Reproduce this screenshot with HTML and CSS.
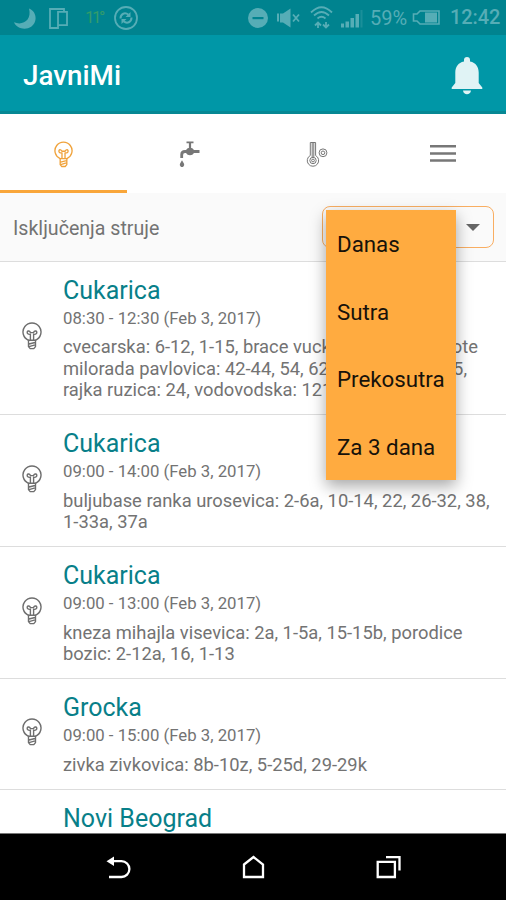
FILE: index.html
```html
<!DOCTYPE html>
<html lang="sr-Latn">
<head>
<meta charset="utf-8">
<title>JavniMi</title>
<link rel="stylesheet" href="styles.css">
</head>
<body>
<svg class="defs" aria-hidden="true">
  <symbol id="bulb" viewBox="0 0 20 28">
    <g fill="none" stroke="currentColor" stroke-width="1.4" stroke-linejoin="round" stroke-linecap="round">
      <path d="M6.500 18.300A9 9 0 1 1 13.500 18.300z"/>
      <path d="M8.400 18V12.300C6 12.600 4.900 11.500 5.200 9.900c.5-1.400 2.900-1.100 3.200.7h3.200c.3-1.800 2.700-2.100 3.200-.7.3 1.600-.8 2.700-3.200 2.400V18"/>
      <path d="M6.500 18.300v6.300l1.700 2h3.600l1.700-2v-6.300M7 22l6-1.500M7 24.600l6-1.700"/>
    </g>
  </symbol>
</svg>
<div class="screen">
  <header class="top">
    <div class="status">
      <svg class="status-left" viewBox="0 0 150 35" fill="none" stroke="currentColor">
        <path fill="currentColor" stroke="none" d="M29 8.500C38 12 38 25 28 28.300c-6 1.500-12-1-14-6C23 26 32 20 29 8.500z"/>
        <path stroke-width="1.800" d="M58 25.500v2.500h-8V9h14v2.500M58 11.800h9v13.300h-9z"/>
        <circle cx="126" cy="18" r="11" stroke-width="1.800"/>
        <path stroke-width="2" d="M120.500 18.500c0-5 4.500-6.500 8-3.800M131.500 17.500c0 5-4.500 6.500-8 3.800"/>
        <path fill="currentColor" stroke="none" d="M130.500 12v5h-5zM121.500 24v-5h5z"/>
      </svg>
      <span class="temp">11°</span>
      <svg class="status-right" viewBox="0 0 120 35" fill="currentColor">
        <circle cx="10" cy="18" r="10"/>
        <path class="cut" d="M4.500 17h11v2.200h-11z"/>
        <path d="M29 13.500h2v8h-2zM32 13.500h3l7.500-5v19l-7.500-5h-3z"/>
        <g fill="none" stroke="currentColor" stroke-width="1.800">
          <path d="M45 14.500l6 7m0-7l-6 7M63 12.500q10.500-10.500 21 0M66 15.500q7.500-7 15 0M69.500 18.500q4-3.500 8 0"/>
          <path d="M70 28v-5m-3 2.500l3-3 3 3M78 22v5m-3-2.500l3 3 3-3"/>
        </g>
        <path d="M93 23.500h3v4h-3zM97.500 21.500h3.500v6h-3.500zM102.500 18h3.500v9.500h-3.500zM107.500 14h3.500v13.500h-3.500z"/>
        <path opacity=".3" d="M112.500 10h2v17.500h-2z"/>
      </svg>
      <span class="percent">59%</span>
      <svg class="battery" viewBox="0 0 30 20"><path fill="none" stroke="currentColor" stroke-width="1.600" d="M27 3H8L5 6H1.500v7H5L8 16h19z"/><path fill="currentColor" d="M13 4.500h12v10H13z"/></svg>
      <span class="clock">12:42</span>
    </div>
    <div class="appbar">
      <h1 class="brand">JavniMi</h1>
      <svg class="bell" viewBox="0 0 32 38" fill="currentColor"><path d="M13 3a3 3 0 0 1 6 0v1.500c6 1.300 8.700 5.500 8.700 11V26l3.600 4.500V32H.7v-1.500L4.300 26V15.500C4.300 10 7 5.800 13 4.500zM12 33.500h8c-.5 5-7.500 5-8 0z"/></svg>
    </div>
  </header>

  <nav class="tabs">
    <div class="tab active"><svg class="tab-bulb"><use href="#bulb"/></svg></div>
    <div class="tab">
      <svg class="tab-tap" viewBox="0 0 22 28" fill="currentColor"><path d="M7.500 1.500h7v1.700h-2.400v5h-2.200v-5H7.500z"/><path d="M7 10a4.600 4.600 0 0 1 8 0h5.500v2.900H15a4.600 4.600 0 0 1-8 0H6q-1.900 0-1.900 2V18H1.300v-3.500q0-4.500 4.700-4.500z"/><path d="M3 20.300l1.900 3.300a2.200 2.200 0 1 1-3.800 0z"/></svg>
    </div>
    <div class="tab">
      <svg class="tab-temp" viewBox="0 0 24 28" fill="none" stroke="currentColor"><path d="M5.300 15.500V2.500h5.300v13a5.700 5.700 0 1 1-5.300 0z"/><circle cx="8" cy="20.500" r="3.200"/><circle cx="8" cy="20.500" r="1.400"/><path d="M7.200 17.500V3M8.800 17.500V3"/><circle cx="18" cy="12.800" r="3.900"/><circle cx="18" cy="12.800" r="1.800"/></svg>
    </div>
    <div class="tab"><svg class="tab-menu" viewBox="0 0 26 20" fill="currentColor"><path d="M0 1h26v2.500H0zM0 8.200h26v2.500H0zM0 15.300h26v2.500H0z"/></svg></div>
  </nav>

  <section class="filter">
    <span class="filter-label">Isključenja struje</span>
    <div class="select">
      <span class="arrow"></span>
      <ul class="menu">
        <li>Danas</li>
        <li>Sutra</li>
        <li>Prekosutra</li>
        <li>Za 3 dana</li>
      </ul>
    </div>
  </section>

  <main class="list">
    <article class="row">
      <svg class="row-icon"><use href="#bulb"/></svg>
      <div class="body"><h2>Cukarica</h2><p class="time">08:30 - 12:30 (Feb 3, 2017)</p>
      <p class="streets">cvecarska: 6-12, 1-15, brace vuckovica: 2-14, pelote<br>milorada pavlovica: 42-44, 54, 62-70, 51-57, 63-75,<br>rajka ruzica: 24, vodovodska: 121</p></div>
    </article>
    <article class="row">
      <svg class="row-icon"><use href="#bulb"/></svg>
      <div class="body"><h2>Cukarica</h2><p class="time">09:00 - 14:00 (Feb 3, 2017)</p>
      <p class="streets">buljubase ranka urosevica: 2-6a, 10-14, 22, 26-32, 38,<br>1-33a, 37a</p></div>
    </article>
    <article class="row">
      <svg class="row-icon"><use href="#bulb"/></svg>
      <div class="body"><h2>Cukarica</h2><p class="time">09:00 - 13:00 (Feb 3, 2017)</p>
      <p class="streets">kneza mihajla visevica: 2a, 1-5a, 15-15b, porodice<br>bozic: 2-12a, 16, 1-13</p></div>
    </article>
    <article class="row">
      <svg class="row-icon"><use href="#bulb"/></svg>
      <div class="body"><h2>Grocka</h2><p class="time">09:00 - 15:00 (Feb 3, 2017)</p>
      <p class="streets">zivka zivkovica: 8b-10z, 5-25d, 29-29k</p></div>
    </article>
    <article class="row">
      <span class="row-icon"></span>
      <div class="body"><h2>Novi Beograd</h2></div>
    </article>
  </main>

  <footer class="navbar">
    <svg class="nav-icon" viewBox="0 0 28 28" fill="none" stroke="currentColor" stroke-width="2.300"><path d="M7 8.200h9.500a7.900 7.900 0 0 1 0 15.800H4"/><path fill="currentColor" stroke="none" d="M1.500 8.200L9 3.500v9.400z"/></svg>
    <svg class="nav-icon" viewBox="0 0 28 28" fill="none" stroke="currentColor" stroke-width="2.300"><path d="M4 11.500L13.500 4l9.500 7.500V24H4z"/></svg>
    <svg class="nav-icon" viewBox="0 0 28 28" fill="none" stroke="currentColor" stroke-width="2.300"><path d="M2.700 8.800h17.200V24H2.700zM11 4.200h13.500V17.500"/></svg>
  </footer>
</div>
</body>
</html>
```
FILE: styles.css
```css
* { box-sizing: border-box; }
body { margin: 0; font-family: Roboto, "Liberation Sans", sans-serif; color: #737373; }
h1, h2, p, ul { margin: 0; padding: 0; }
svg { display: block; flex: none; }
.defs { position: absolute; width: 0; height: 0; }
.screen { width: 506px; height: 900px; overflow: hidden; display: flex; flex-direction: column; background: #fff; }

.top { flex: none; height: 114px; background: #0097a7; color: #fff; border-bottom: 3px solid #078894; }
.status { height: 35px; background: #00838f; color: #56adb6; display: flex; align-items: center; }
.status-left { width: 150px; height: 35px; }
.temp { width: 98px; margin-left: -65px; margin-right: 65px; font-size: 17px; letter-spacing: -2.500px; color: #329b6b; line-height: 35px; }
.status-right { width: 120px; height: 35px; }
.cut { fill: #00838f; }
.percent { margin-left: 2px; width: 42px; font-size: 20px; line-height: 38px; white-space: nowrap; }
.battery { width: 30px; height: 20px; }
.clock { margin-left: 8px; font-size: 20px; font-weight: 500; line-height: 39px; letter-spacing: -.1px; }
.appbar { height: 76px; padding: 5px 23px 0; display: flex; align-items: center; justify-content: space-between; }
.brand { font-size: 27.800px; line-height: 36px; font-weight: 500; padding-top: 1px; }
.bell { width: 32px; height: 38px; color: #e0f3f5; }

.tabs { flex: none; height: 79px; display: grid; grid-template-columns: 127px 126px 127px 126px; }
.tab { display: flex; align-items: center; justify-content: center; color: #777; border-bottom: 3px solid transparent; padding-top: 4px; }
.active { color: #f0a33c; border-color: #f9a63a; }
.tab-bulb { width: 19px; height: 27px; }
.tab-tap { width: 22px; height: 28px; }
.tab-temp { width: 24px; height: 28px; }
.tab-menu { width: 26px; height: 20px; }

.filter { flex: none; height: 69px; padding: 0 12px 0 13px; background: #fafafa; border-bottom: 1px solid #ddd; display: flex; align-items: center; justify-content: space-between; }
.filter-label { font-size: 19.600px; padding-top: 2px; }
.select { position: relative; width: 172px; height: 42px; border: 1.5px solid #f9ae62; border-radius: 8px; display: flex; align-items: center; justify-content: flex-end; padding-right: 13px; }
.arrow { border: 7px solid transparent; border-top-color: #666; border-bottom: 0; }
.menu { position: absolute; z-index: 2; top: 3px; left: 3px; width: 130px; height: 270px; background: #ffab40; color: #17120a; list-style: none; box-shadow: 0 6px 15px rgba(0,0,0,.35); font-size: 22.300px; }
.menu li { height: 67.500px; padding-left: 11px; line-height: 69px; white-space: nowrap; }

.list { flex: 1; min-height: 0; overflow: hidden; }
.row { display: flex; align-items: center; border-bottom: 1px solid #ddd; }
.row-icon { flex: none; width: 20px; height: 28px; margin: 0 21.500px 4px 21.500px; color: #6e6e6e; }
.body { flex: 1; padding: 12px 0 14px; white-space: nowrap; }
.row h2 { font-size: 25px; font-weight: 400; line-height: 34px; color: #087f89; }
.time { margin-top: -1px; font-size: 16.750px; line-height: 22px; }
.streets { margin-top: 7.400px; font-size: 18.350px; line-height: 21.300px; }

.navbar { flex: none; height: 67px; background: #000; color: #fff; border-top: 1px solid #777; display: flex; align-items: center; justify-content: center; gap: 107px; padding-left: 1px; }
.nav-icon { width: 28px; height: 28px; }
```
